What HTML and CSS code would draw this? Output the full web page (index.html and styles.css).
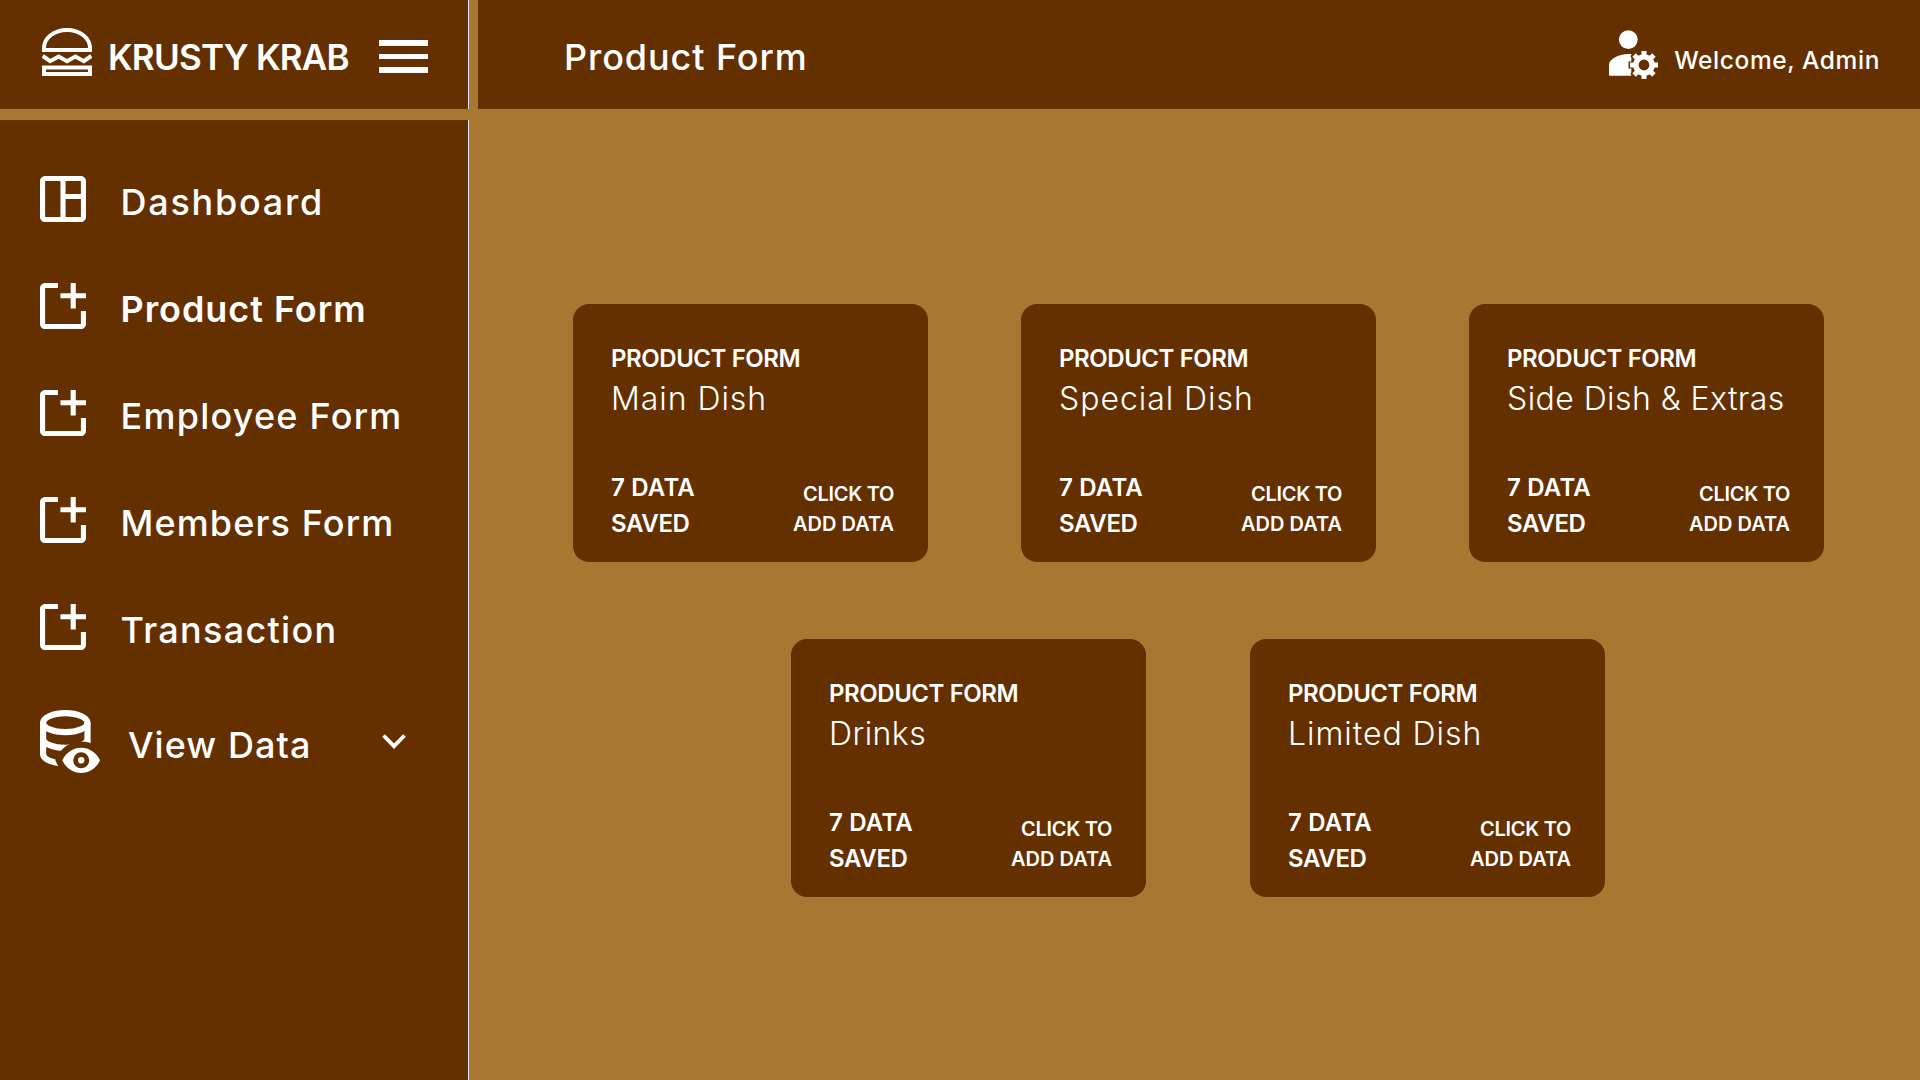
FILE: index.html
```html
<!DOCTYPE html>
<html lang="en">
<head>
<meta charset="utf-8">
<title>Krusty Krab - Product Form</title>
<link rel="stylesheet" href="styles.css">
</head>
<body>
<svg class="defs" aria-hidden="true">
  <symbol id="icon-add" viewBox="3 3 18 18">
    <path d="M10 3v2H5v14h14v-5h2v5c0 1.1-.9 2-2 2H5c-1.1 0-2-.9-2-2V5c0-1.1.9-2 2-2z"/>
    <path d="M15 3h2v4h4v2h-4v4h-2V9h-4V7h4z"/>
  </symbol>
</svg>
<div class="app">
  <aside class="side">
    <div class="brand">
      <svg class="brand-logo" viewBox="0 0 50 49">
        <path d="M2 21.9V20C2 10 12 2 25 2s23 8 23 18v1.900z"/>
        <path d="M.7 28 8.200 33.200 16.600 28.500 25 33.200 33.400 28.500 41.800 33.200 49.300 28"/>
        <path d="M2 39.600h46v6.500H2z"/>
      </svg>
      <span class="brand-name">KRUSTY KRAB</span>
      <button class="menu" aria-label="Menu"><i></i><i></i><i></i></button>
    </div>
    <nav class="nav">
      <a class="nav-item">
        <svg class="nav-icon" viewBox="3 3 18 18"><path fill-rule="evenodd" d="M19 3H5c-1.100 0-2 .9-2 2v14c0 1.100.9 2 2 2h14c1.100 0 2-.9 2-2V5c0-1.100-.9-2-2-2zM5 5h6v14H5zM13 5h6v5h-6zM13 12h6v7h-6z"/></svg>
        <span class="t-dashboard">Dashboard</span>
      </a>
      <a class="nav-item active">
        <svg class="nav-icon"><use href="#icon-add"/></svg>
        <span class="t-product">Product Form</span>
      </a>
      <a class="nav-item">
        <svg class="nav-icon"><use href="#icon-add"/></svg>
        <span class="t-employee">Employee Form</span>
      </a>
      <a class="nav-item">
        <svg class="nav-icon"><use href="#icon-add"/></svg>
        <span class="t-members">Members Form</span>
      </a>
      <a class="nav-item">
        <svg class="nav-icon"><use href="#icon-add"/></svg>
        <span class="t-transaction">Transaction</span>
      </a>
      <a class="nav-item nav-view">
        <svg class="view-icon" viewBox="0 0 60 64">
          <mask id="eye-gap" maskUnits="userSpaceOnUse" x="0" y="0" width="60" height="64">
            <rect width="60" height="64" fill="#fff"/>
            <path d="M22.300 50.300C26 42.500 33 37.700 41.200 37.700S56.400 42.500 60 50.300C56.400 58.200 49.400 63 41.200 63S26 58.200 22.300 50.300z" fill="#000" stroke="#000" stroke-width="12.600"/>
          </mask>
          <g mask="url(#eye-gap)" fill="none" stroke="#fff" stroke-width="6.200">
            <ellipse cx="25.300" cy="12.700" rx="22.200" ry="9.500"/>
            <path d="M3.100 12.700V44c0 5.300 9.900 9.500 22.200 9.500M47.500 12.700V44M3.100 28.400c0 5.300 9.900 9.500 22.200 9.500s22.200-4.200 22.200-9.500"/>
          </g>
          <path fill-rule="evenodd" d="M22.300 50.300C26 42.500 33 37.700 41.200 37.700S56.400 42.500 60 50.300C56.400 58.200 49.400 63 41.200 63S26 58.200 22.300 50.300zM33.200 50.300a8 8 0 1 0 16 0a8 8 0 1 0-16 0z"/>
          <circle cx="41.200" cy="50.300" r="3.200"/>
        </svg>
        <span class="t-view">View Data</span>
        <svg class="chevron" viewBox="0 0 24 15"><path d="M1.500 1.500 12 12.200 22.500 1.500"/></svg>
      </a>
    </nav>
  </aside>
  <div class="content">
    <header class="topbar">
      <h1 class="title">Product Form</h1>
      <div class="user">
        <svg class="user-icon" viewBox="0 0 49 49">
          <mask id="gear-gap" maskUnits="userSpaceOnUse" x="0" y="0" width="49" height="49">
            <rect width="49" height="49" fill="#fff"/>
            <circle cx="35" cy="35" r="12.700" fill="#000"/>
            <path d="M35 35H19.500M35 35 23.800 23.800M35 35 23.800 46.200" stroke="#000" stroke-width="7"/>
          </mask>
          <circle cx="19.300" cy="9.600" r="9.400"/>
          <path mask="url(#gear-gap)" d="M0 44.500V34.500C0 29.500 9 24 19.500 24H22.300V45.700H1.200Q0 45.700 0 44.500z"/>
          <circle cx="35" cy="35" r="8.100" fill="none" stroke="#fff" stroke-width="5.400"/>
          <path d="M35 21v5M35 44v5M21 35h5M44 35h5M25.100 25.100l3.500 3.500M41.400 41.400l3.500 3.500M44.900 25.100l-3.500 3.500M28.600 41.400l-3.500 3.500" stroke="#fff" stroke-width="5"/>
        </svg>
        <span>Welcome, Admin</span>
      </div>
    </header>
    <main class="cards">
      <div class="row">
        <section class="card">
          <div class="label">PRODUCT FORM</div>
          <h2 class="name">Main Dish</h2>
          <div class="foot">
            <div class="saved"><span class="count">7 DATA</span><span class="state">SAVED</span></div>
            <div class="add"><span class="click">CLICK TO</span><span>ADD DATA</span></div>
          </div>
        </section>
        <section class="card">
          <div class="label">PRODUCT FORM</div>
          <h2 class="name">Special Dish</h2>
          <div class="foot">
            <div class="saved"><span class="count">7 DATA</span><span class="state">SAVED</span></div>
            <div class="add"><span class="click">CLICK TO</span><span>ADD DATA</span></div>
          </div>
        </section>
        <section class="card">
          <div class="label">PRODUCT FORM</div>
          <h2 class="name name-tight">Side Dish &amp; Extras</h2>
          <div class="foot">
            <div class="saved"><span class="count">7 DATA</span><span class="state">SAVED</span></div>
            <div class="add"><span class="click">CLICK TO</span><span>ADD DATA</span></div>
          </div>
        </section>
      </div>
      <div class="row row-pair">
        <section class="card">
          <div class="label">PRODUCT FORM</div>
          <h2 class="name name-tight">Drinks</h2>
          <div class="foot">
            <div class="saved"><span class="count">7 DATA</span><span class="state">SAVED</span></div>
            <div class="add"><span class="click">CLICK TO</span><span>ADD DATA</span></div>
          </div>
        </section>
        <section class="card">
          <div class="label">PRODUCT FORM</div>
          <h2 class="name">Limited Dish</h2>
          <div class="foot">
            <div class="saved"><span class="count">7 DATA</span><span class="state">SAVED</span></div>
            <div class="add"><span class="click">CLICK TO</span><span>ADD DATA</span></div>
          </div>
        </section>
      </div>
    </main>
  </div>
</div>
</body>
</html>
```
FILE: styles.css
```css
:root {
  --brown: #643000;
  --gold: #a87832;
  --rule: #e3e1f5;
}

* { box-sizing: border-box; }

body {
  margin: 0;
  background: var(--gold);
  color: #fff;
  font-family: Inter, sans-serif;
  font-weight: 500;
}

svg { display: block; flex: none; fill: #fff; }
.defs { display: none; }

.app {
  display: grid;
  grid-template-columns: 469px 1fr;
  column-gap: 9px;
  height: 1080px;
  overflow: hidden;
}

/* Sidebar */
.side {
  display: flex;
  flex-direction: column;
  gap: 11px;
}

.brand,
.nav {
  background: var(--brown);
  border-right: 1px solid var(--rule);
}

.brand {
  display: flex;
  align-items: center;
  height: 109px;
  padding: 6px 40px 0 42px;
}

.brand-logo {
  width: 50px;
  height: 49px;
  margin: 0 16px 10px 0;
  fill: none;
  stroke: #fff;
  stroke-width: 4;
}

.brand-name {
  margin-bottom: 2px;
  font-size: 35px;
  font-weight: 600;
  letter-spacing: -0.77px;
  white-space: nowrap;
}

.menu {
  display: flex;
  flex-direction: column;
  gap: 8px;
  width: 49px;
  margin: 0 0 2px auto;
  padding: 0;
  border: 0;
  background: none;
}

.menu i { height: 5.5px; background: #fff; }

.nav {
  flex: 1;
  padding: 29px 62px 0 40px;
}

.nav-item {
  display: flex;
  align-items: center;
  height: 107px;
  font-size: 36px;
  white-space: nowrap;
}

.nav-item span { margin-bottom: 2px; }

.nav-icon {
  width: 46px;
  height: 46px;
  margin: 0 34.5px 7px 0;
}

.active { font-weight: 600; }
.t-dashboard { letter-spacing: 1.75px; }
.t-product { letter-spacing: 0.94px; }
.t-employee { letter-spacing: 1.23px; }
.t-members { letter-spacing: 1.13px; }
.t-transaction { letter-spacing: 1.3px; }
.t-view { letter-spacing: 1.07px; }

.nav-view { height: 123px; }

.view-icon {
  width: 60px;
  height: 64px;
  margin: 0 28px 8px 0;
}

.chevron {
  width: 24px;
  height: 15px;
  margin: 0 0 8px auto;
  fill: none;
  stroke: #fff;
  stroke-width: 3.8;
}

/* Top bar */
.topbar {
  display: flex;
  align-items: center;
  justify-content: space-between;
  height: 109px;
  padding: 6px 40px 0 86px;
  background: var(--brown);
}

.title {
  margin: 0 0 2px;
  font-size: 36px;
  font-weight: 500;
  letter-spacing: 0.92px;
}

.user {
  display: flex;
  align-items: center;
  gap: 16.5px;
  padding-top: 4px;
  font-size: 24.5px;
  letter-spacing: 0.58px;
}

.user-icon {
  width: 49px;
  height: 49px;
  margin-bottom: 10px;
}

/* Cards */
.cards {
  display: flex;
  flex-direction: column;
  align-items: center;
  gap: 77px;
  padding: 195px 1px 0 0;
}

.row { display: flex; gap: 93px; }
.row-pair { gap: 104px; margin-right: 1px; }

.card {
  display: flex;
  flex-direction: column;
  width: 355px;
  height: 258px;
  padding: 36.5px 34px 20.5px 38px;
  border-radius: 16px;
  background: var(--brown);
}

.label {
  font-size: 24px;
  font-weight: 600;
  line-height: 36px;
  letter-spacing: -0.44px;
}

.name {
  margin: 0;
  font-size: 32px;
  font-weight: 300;
  line-height: 43px;
  letter-spacing: 0.95px;
  white-space: nowrap;
}

.name-tight { letter-spacing: 0.43px; }

.foot {
  display: flex;
  align-items: flex-end;
  justify-content: space-between;
  margin-top: auto;
}

.saved,
.add {
  display: flex;
  flex-direction: column;
  font-weight: 600;
}

.saved { font-size: 24px; line-height: 36px; }
.count { letter-spacing: 0.2px; }
.state { letter-spacing: -0.35px; }

.add {
  align-items: flex-end;
  margin-bottom: 2.5px;
  font-size: 20px;
  line-height: 30px;
}

.click { letter-spacing: -0.3px; }
```
